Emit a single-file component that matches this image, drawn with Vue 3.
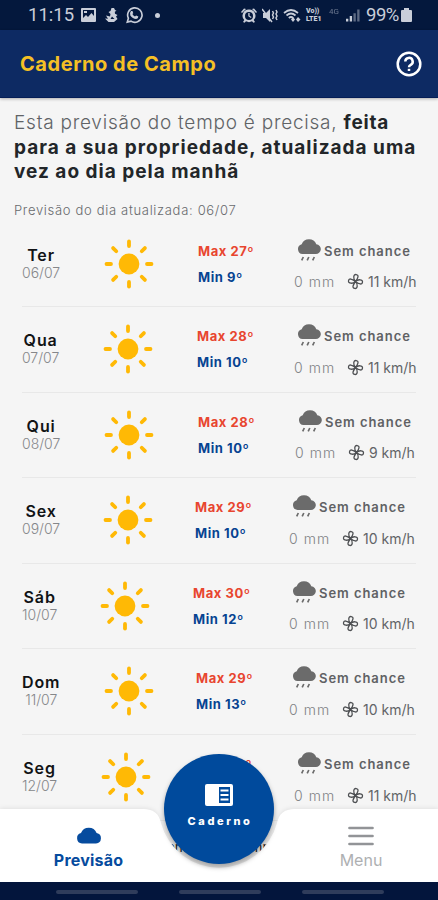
<template>
  <div class="app">
    <div class="status">
      <div class="status__left">
        <span class="status__time">11:15</span>
        <svg class="status__photo" width="15" height="14" viewBox="0 0 15 14">
          <path
            fill-rule="evenodd"
            d="M1 0h13q1 0 1 1v12q0 1-1 1H1q-1 0-1-1V1q0-1 1-1zm1 2v8l3-3 2 2 3.500-4L13 8V2z"
          />
          <path d="M3 3h3v2H3z" />
        </svg>
        <svg class="status__duck" width="13" height="14" viewBox="0 0 13 14">
          <path
            fill-rule="evenodd"
            d="M6.500 0h2.500l1 2 1.500.7-1.700 1 .2 2L12.500 7l-1.500 1.500L12.500 11l-3.500 3H3.500L0 10.500l3 .3L1 7.500l4 1 .5-2.500L3.500 4l2-1zM7 8.500l-1.500 2.500h4z"
          />
        </svg>
        <svg class="status__whats" width="18" height="18" viewBox="0 0 24 24">
          <path
            d="M3 21.500l1.500-5.200A9.600 9.600 0 1 1 8 20.200z"
            fill="none"
            stroke="#c9ced9"
            stroke-width="2.200"
          />
          <path
            d="M8 6.500l2 0 1 3-1.200 1.300q1.200 2.300 3.500 3.300l1.500-1.500 3 1.400q0 3-3 3.300-4.500 0-7.700-4.600Q5.800 9 8 6.500z"
          />
        </svg>
        <span class="status__dot"></span>
      </div>
      <div class="status__right">
        <svg width="16" height="15" viewBox="0 0 16 15">
          <path
            fill-rule="evenodd"
            d="M8 1.500a6.200 6.200 0 0 1 4.700 10.500l1.300 2-1.500.8-1.500-1.500a6.200 6.200 0 0 1-6 0L3.500 14.800 2 14l1.300-2A6.200 6.200 0 0 1 8 1.500zm0 2.400a4 4 0 1 0 0 8 4 4 0 0 0 0-8zM7.300 5h1.300v2.700l2 1.300-.7 1-2.600-1.700zM0 4l3-3.500L5 1 1 5zM16 4l-3-3.500L11 1l4 4z"
          />
        </svg>
        <svg width="16" height="15" viewBox="0 0 16 15">
          <path d="M1 5h3l4-4v13l-4-4H1z" />
          <path
            d="M0 1l10 13M10.500 3l1 2-1 2 1 2-1 2M14 2l1 2-1 2 1 2-1 2 1 2"
            fill="none"
            stroke="#c9ced9"
            stroke-width="1.500"
          />
        </svg>
        <svg width="18" height="15" viewBox="0 0 18 15">
          <path
            d="M1 5q7-6 14 0M3.500 7.500q4.500-4 9 0M5.800 10q2.200-2 4.400 0"
            fill="none"
            stroke="#c9ced9"
            stroke-width="1.700"
          />
          <path d="M10 9l2 2.500-2 2.500-2-2.500zM15 9l2.500 2.500L15 14l-2-2.500z" />
        </svg>
        <span class="status__volte"><span>Vo))</span><span>LTE1</span></span>
        <span class="status__4g">4G</span>
        <svg class="status__signal" width="14" height="13" viewBox="0 0 15 13">
          <path d="M0 10h2.500v3H0zM4 7h2.500v6H4z" />
          <path d="M8 4h2.500v9H8zM12 0h2.500v13H12z" opacity=".45" />
        </svg>
        <span class="status__percent">99%</span>
        <svg class="status__battery" width="11" height="14" viewBox="0 0 11 14">
          <path d="M3 0h5v2h2q1 0 1 1v10q0 1-1 1H1q-1 0-1-1V3q0-1 1-1h2z" />
        </svg>
      </div>
    </div>

    <header class="header">
      <h1 class="header__title">Caderno de Campo</h1>
      <svg class="header__help" width="26" height="26" viewBox="0 0 26 26">
        <circle cx="13" cy="13" r="11.300" />
        <path d="M9.300 10.600a3.700 3.700 0 1 1 5.500 3.200q-1.800 1.100-1.800 2.500" />
        <path d="M13 17.800v2.200" />
      </svg>
    </header>

    <main class="content">
      <p class="intro">
        <span class="intro__line intro__line_1">
          Esta previsão do tempo é precisa, <b>feita</b>
        </span>
        <b class="intro__line intro__line_2">para a sua propriedade, atualizada uma</b>
        <b class="intro__line intro__line_3">vez ao dia pela manhã</b>
      </p>
      <p class="updated">Previsão do dia atualizada: 06/07</p>

      <div
        v-for="day in days"
        :key="day.date"
        class="day"
        :style="{ gridTemplateColumns: columns(day) }"
      >
        <div class="day__when">
          <div class="day__name">{{ day.name }}</div>
          <div class="day__date">{{ day.date }}</div>
        </div>
        <svg class="day__sun" width="50" height="50" viewBox="-25 -25 50 50">
          <circle r="10.400" />
          <path
            v-for="n in 8"
            :key="n"
            d="M0-22.500v4.500"
            :transform="`rotate(${n * 45})`"
          />
        </svg>
        <div class="day__temps">
          <div class="day__max">Max {{ day.max }}º</div>
          <div class="day__min">Min {{ day.min }}º</div>
        </div>
        <div class="day__rain">
          <div class="day__chance">
            <svg width="24" height="24" viewBox="0 0 24 24">
              <path
                d="M5.500 15a5 5 0 0 1-.8-9.800A7.800 7.800 0 0 1 19.300 5.200 4.900 4.900 0 0 1 18.500 15z"
              />
              <path
                class="day__drops"
                d="M6.300 18l-1.600 3.300M11.800 18l-1.600 3.300M17.300 18l-1.600 3.300"
              />
            </svg>
            <span>Sem chance</span>
          </div>
          <div class="day__details">
            <span class="day__mm">0 mm</span>
            <svg width="17" height="17" viewBox="-8.500 -8.500 17 17">
              <path
                v-for="n in 4"
                :key="n"
                d="M0 0C-3-2-3.500-7-.5-7 2.500-7 2-4 0 0M0 0L1.500-3"
                :transform="`rotate(${n * 90 + 10})`"
              />
            </svg>
            <span class="day__wind">{{ day.wind }} km/h</span>
          </div>
        </div>
      </div>

      <div class="source">Fonte: Climatempo</div>
    </main>

    <nav class="nav">
      <svg class="nav__shape" width="438" height="83" viewBox="0 -10 438 83">
        <path
          d="M0 0H143C154 0 159 5 161 14A60 60 0 0 0 277 14C279 5 284 0 295 0H438V73H0z"
        />
      </svg>
      <div class="nav__item nav__item_active">
        <svg width="26" height="17" viewBox="0 0 26 17">
          <path
            d="M6 16.500a5.300 5.300 0 0 1-1-10.400A8.400 8.400 0 0 1 20.600 6a5.300 5.300 0 0 1-.6 10.500z"
          />
        </svg>
        <span>Previsão</span>
      </div>
      <div class="nav__item">
        <svg width="26" height="20" viewBox="0 0 26 20">
          <path d="M1.500 2h23M1.500 10h23M1.500 18h23" />
        </svg>
        <span class="nav__menu">Menu</span>
      </div>
      <div class="nav__round">
        <svg width="28" height="22" viewBox="0 0 28 22">
          <rect width="28" height="22" rx="2" fill="#fff" />
          <path d="M14 3H25v16H14z" fill="#004a9c" />
          <path d="M15.500 6.500h8M15.500 11h8M15.500 15.500h8" stroke="#fff" stroke-width="2" />
        </svg>
        <span>Caderno</span>
      </div>
    </nav>

    <div class="system">
      <span class="system__bar"></span>
      <span class="system__bar"></span>
      <span class="system__bar"></span>
    </div>
  </div>
</template>

<script setup>
// sun, temps and rain are the left edges of the row's columns
const days = [
  { name: "Ter", date: "06/07", max: 27, min: 9, wind: 11, sun: 104, temps: 198, rain: 294 },
  { name: "Qua", date: "07/07", max: 28, min: 10, wind: 11, sun: 103, temps: 197, rain: 294 },
  { name: "Qui", date: "08/07", max: 28, min: 10, wind: 9, sun: 104, temps: 198, rain: 295 },
  { name: "Sex", date: "09/07", max: 29, min: 10, wind: 10, sun: 103, temps: 195, rain: 289 },
  { name: "Sáb", date: "10/07", max: 30, min: 12, wind: 10, sun: 100, temps: 193, rain: 289 },
  { name: "Dom", date: "11/07", max: 29, min: 13, wind: 10, sun: 104, temps: 196, rain: 289 },
  { name: "Seg", date: "12/07", max: 29, min: 13, wind: 11, sun: 101, temps: 195, rain: 294 },
];

function columns({ sun, temps, rain }) {
  return `${sun - 22}px ${temps - sun}px ${rain - temps}px 1fr`;
}
</script>

<style>
body {
  margin: 0;
  background: #f5f5f5;
}
</style>

<style scoped>
*,
*::before,
*::after {
  box-sizing: border-box;
}

.app {
  display: flex;
  flex-direction: column;
  width: 438px;
  height: 900px;
  overflow: hidden;
  background: #f5f5f5;
  color: #222629;
  font-family: "Inter", "Open Sans", sans-serif;
}

.app svg {
  display: block;
  flex: none;
}

.status {
  display: flex;
  flex: none;
  align-items: center;
  justify-content: space-between;
  height: 30px;
  padding: 0 26px 0 28px;
  background: #04183d;
  color: #c9ced9;
  fill: #c9ced9;
  font-family: Roboto, sans-serif;
}

.status__left,
.status__right {
  display: flex;
  align-items: center;
}

.status__time {
  width: 53px;
  font-size: 18.500px;
}

.status__duck {
  margin-left: 9px;
}

.status__whats {
  margin-left: 7px;
}

.status__dot {
  width: 5px;
  height: 5px;
  margin-left: 12px;
  border-radius: 50%;
  background: #c9ced9;
}

.status__right {
  gap: 5px;
}

.status__volte {
  display: flex;
  flex-direction: column;
  width: 18px;
  font-size: 7px;
  font-weight: 900;
  line-height: 8px;
}

.status__4g {
  width: 12px;
  padding-bottom: 7px;
  font-size: 8px;
  opacity: 0.5;
}

.status__percent {
  width: 34px;
  margin-left: 1px;
  font-size: 18.500px;
  letter-spacing: -0.5px;
}

.status__battery {
  margin-left: -4px;
}

.header {
  display: flex;
  flex: none;
  align-items: center;
  justify-content: space-between;
  height: 68px;
  padding: 0 16px 0 20px;
  border-bottom: 1px solid #041d56;
  background: #0d2a63;
  box-shadow: 0 1px 3px rgba(0, 0, 0, 0.3);
  z-index: 1;
}

.header__title {
  margin: 0;
  color: #f5c025;
  font-size: 20px;
  font-weight: 700;
  letter-spacing: 0.55px;
}

.header__help {
  fill: none;
  stroke: #fff;
  stroke-width: 2.500;
}

.content {
  flex: 1;
  min-height: 0;
  padding: 13px 22px 0;
}

.intro {
  margin: 0 -8px;
  font-size: 19px;
  line-height: 24.500px;
  white-space: nowrap;
}

.intro b {
  font-weight: 700;
}

.intro__line {
  display: block;
}

.intro__line_1 {
  color: #606366;
  font-weight: 300;
  letter-spacing: 0.76px;
}

.intro__line_1 b {
  color: #222629;
}

.intro__line_2,
.intro__line_3 {
  letter-spacing: 1px;
}

.updated {
  height: 37px;
  margin: 0 -8px;
  padding-top: 17px;
  color: #686a6d;
  font-size: 13px;
  font-weight: 300;
  letter-spacing: 0.68px;
  line-height: 16px;
}

.day {
  display: grid;
  align-items: start;
  height: 85.600px;
  border-bottom: 1px solid #e8e8e8;
  white-space: nowrap;
}

.day__when {
  width: max-content;
  padding-top: 24px;
  text-align: center;
}

.day__name {
  color: #111315;
  font-size: 16px;
  font-weight: 600;
  letter-spacing: 0.9px;
  line-height: 19px;
}

.day__date {
  color: #85878a;
  font-size: 14px;
  font-weight: 300;
  line-height: 16px;
}

.day__sun {
  margin-top: 17px;
  fill: #ffb905;
  stroke: #ffb905;
  stroke-width: 3.800;
  stroke-linecap: round;
}

.day__sun circle {
  stroke: none;
}

.day__temps {
  padding-top: 20px;
  font-size: 13px;
  font-weight: 700;
  letter-spacing: 0.55px;
  line-height: 18px;
}

.day__max {
  color: #e8452f;
}

.day__min {
  margin-top: 8px;
  color: #064391;
}

.day__chance {
  display: flex;
  gap: 3px;
  padding: 17px 0 0 3px;
  color: #5f6164;
  font-size: 13px;
  font-weight: 600;
  letter-spacing: 0.95px;
  line-height: 24px;
}

.day__chance svg {
  fill: #6b6b6b;
}

.day__drops {
  stroke: #6b6b6b;
  stroke-width: 1.700;
}

.day__details {
  display: flex;
  align-items: center;
  height: 20px;
  margin-top: 9px;
  color: #626467;
  font-size: 14px;
}

.day__mm {
  width: 53px;
  color: #808285;
  font-weight: 300;
  letter-spacing: 1.1px;
}

.day__details svg {
  fill: none;
  stroke: #4d4f52;
  stroke-width: 1.300;
}

.day__wind {
  margin-left: 4px;
}

.source {
  padding-top: 18px;
  font-size: 13.500px;
  text-align: center;
}

.nav {
  position: relative;
  display: flex;
  flex: none;
  height: 73px;
}

.nav__shape {
  position: absolute;
  top: -10px;
  left: 0;
  fill: #fff;
  filter: drop-shadow(0 -1px 2px rgba(0, 0, 0, 0.08));
}

.nav__item {
  position: relative;
  display: flex;
  flex-direction: column;
  align-items: center;
  width: 177px;
  padding-top: 17px;
  color: #aeb0b2;
  font-size: 16px;
}

.nav__item:nth-of-type(2) {
  width: 154px;
  margin-left: 107px;
}

.nav__item path {
  stroke: #929497;
  stroke-width: 2.700;
  stroke-linecap: round;
}

.nav__item span {
  margin-top: 4px;
  line-height: 20px;
}

.nav__item_active {
  padding-top: 18px;
  color: #064b9e;
  font-weight: 700;
  letter-spacing: 0.2px;
}

.nav__item_active path {
  fill: #064b9e;
  stroke: none;
}

.nav__item_active span {
  margin-top: 6px;
}

.nav__round {
  position: absolute;
  top: -55px;
  left: 164px;
  display: flex;
  flex-direction: column;
  align-items: center;
  width: 110px;
  height: 110px;
  padding-top: 30px;
  border-radius: 50%;
  background: #004a9c;
  box-shadow: 0 3px 5px rgba(0, 0, 0, 0.35);
  color: #fff;
  font-size: 11px;
  font-weight: 800;
  letter-spacing: 2.600px;
}

.nav__round span {
  margin-top: 8px;
  padding-left: 2px;
}

.system {
  display: flex;
  flex: none;
  gap: 41px;
  height: 18px;
  padding: 8px 0 0 56px;
  background: #03153c;
  z-index: 1;
}

.system__bar {
  width: 82px;
  height: 4px;
  border-radius: 2px;
  background: #2f3c5b;
}
</style>
